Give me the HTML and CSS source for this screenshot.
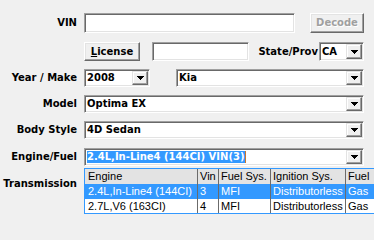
FILE: index.html
```html
<!DOCTYPE html>
<html>
<head>
<meta charset="utf-8">
<title>Vehicle</title>
<link rel="stylesheet" href="styles.css">
</head>
<body>
<div class="form">
  <div class="row row-vin">
    <span class="lbl">VIN</span>
    <div class="fields">
      <div class="edit edit-vin"></div>
      <button class="btn btn-decode" disabled>Decode</button>
    </div>
  </div>

  <div class="row row-lic">
    <span class="lbl"></span>
    <div class="fields">
      <button class="btn btn-lic"><u>L</u>icense</button>
      <div class="edit edit-plate"></div>
      <span class="lbl lbl-state">State/Prov</span>
      <div class="combo combo-state"><span class="combo-text">CA</span><span class="drop"><svg width="7" height="4" viewBox="0 0 7 4" shape-rendering="crispEdges"><path d="M0 0h7v1H0zM1 1h5v1H1zM2 2h3v1H2zM3 3h1v1H3z"/></svg></span></div>
    </div>
  </div>

  <div class="row row-std">
    <span class="lbl">Year / Make</span>
    <div class="fields">
      <div class="combo combo-year"><span class="combo-text">2008</span><span class="drop"><svg width="7" height="4" viewBox="0 0 7 4" shape-rendering="crispEdges"><path d="M0 0h7v1H0zM1 1h5v1H1zM2 2h3v1H2zM3 3h1v1H3z"/></svg></span></div>
      <div class="combo combo-make"><span class="combo-text">Kia</span><span class="drop"><svg width="7" height="4" viewBox="0 0 7 4" shape-rendering="crispEdges"><path d="M0 0h7v1H0zM1 1h5v1H1zM2 2h3v1H2zM3 3h1v1H3z"/></svg></span></div>
    </div>
  </div>

  <div class="row row-std">
    <span class="lbl">Model</span>
    <div class="fields">
      <div class="combo combo-full"><span class="combo-text">Optima EX</span><span class="drop"><svg width="7" height="4" viewBox="0 0 7 4" shape-rendering="crispEdges"><path d="M0 0h7v1H0zM1 1h5v1H1zM2 2h3v1H2zM3 3h1v1H3z"/></svg></span></div>
    </div>
  </div>

  <div class="row row-std">
    <span class="lbl">Body Style</span>
    <div class="fields">
      <div class="combo combo-full"><span class="combo-text">4D Sedan</span><span class="drop"><svg width="7" height="4" viewBox="0 0 7 4" shape-rendering="crispEdges"><path d="M0 0h7v1H0zM1 1h5v1H1zM2 2h3v1H2zM3 3h1v1H3z"/></svg></span></div>
    </div>
  </div>

  <div class="row row-engine">
    <span class="lbl">Engine/Fuel</span>
    <div class="fields">
      <div class="combo combo-full combo-open"><span class="combo-text"><span class="hl">2.4L,In-Line4 (144CI) VIN(3)</span><span class="caret"></span></span><span class="drop"><svg width="7" height="4" viewBox="0 0 7 4" shape-rendering="crispEdges"><path d="M0 0h7v1H0zM1 1h5v1H1zM2 2h3v1H2zM3 3h1v1H3z"/></svg></span>
        <div class="droplist">
          <div class="grow ghead">
            <span class="cell">Engine</span><span class="cell">Vin</span><span class="cell">Fuel Sys.</span><span class="cell">Ignition Sys.</span><span class="cell">Fuel</span>
          </div>
          <div class="grow gsel">
            <span class="cell">2.4L,In-Line4 (144CI)</span><span class="cell">3</span><span class="cell">MFI</span><span class="cell">Distributorless</span><span class="cell">Gas</span>
          </div>
          <div class="grow">
            <span class="cell">2.7L,V6 (163CI)</span><span class="cell">4</span><span class="cell">MFI</span><span class="cell">Distributorless</span><span class="cell">Gas</span>
          </div>
        </div>
      </div>
    </div>
  </div>

  <div class="row row-trans">
    <span class="lbl">Transmission</span>
    <div class="fields">
      <div class="combo combo-full"><span class="combo-text"></span><span class="drop"><svg width="7" height="4" viewBox="0 0 7 4" shape-rendering="crispEdges"><path d="M0 0h7v1H0zM1 1h5v1H1zM2 2h3v1H2zM3 3h1v1H3z"/></svg></span></div>
    </div>
  </div>
</div>
</body>
</html>
```

FILE: styles.css
```css
html, body {
  margin: 0;
  padding: 0;
  overflow: hidden;
}

body {
  width: 374px;
  height: 214px;
  background: #f0f0f0;
  color: #000;
  font-family: "DejaVu Sans", "Liberation Sans", sans-serif;
  font-weight: bold;
  font-size: 10px;
}

.form {
  display: flex;
  flex-direction: column;
  padding-top: 13px;
}

.row {
  display: grid;
  grid-template-columns: 77px 280px;
  column-gap: 7px;
  align-items: center;
  height: 18px;
  margin-top: 8px;
}

.row-vin { height: 20px; margin-top: 0; }
.row-lic { height: 19px; margin-top: 9px; }
.row-engine { margin-top: 9px; position: relative; z-index: 2; }
.row-trans { margin-top: 9px; }

.lbl {
  text-align: right;
  white-space: nowrap;
  line-height: 12px;
}

.fields {
  display: flex;
  height: 100%;
  align-items: stretch;
}

/* sunken edit box */
.edit,
.combo {
  box-sizing: border-box;
  background: #fff;
  border: 1px solid;
  border-color: #a0a0a0 #fff #fff #a0a0a0;
  box-shadow: inset 1px 1px #696969, inset -1px -1px #e3e3e3;
}

.edit-vin { width: 211px; }
.edit-plate { width: 97px; }

/* raised button */
.btn {
  box-sizing: border-box;
  margin: 0;
  padding: 0;
  background: #f0f0f0;
  border: 1px solid;
  border-color: #fff #696969 #696969 #fff;
  box-shadow: inset -1px -1px #a0a0a0, inset 1px 1px #e3e3e3;
  font: inherit;
  color: #000;
  line-height: 12px;
  text-align: center;
}

.btn u { text-decoration: underline; }

.btn-decode {
  width: 54px;
  margin-left: auto;
  color: #a0a0a0;
  text-shadow: 1px 1px #fff;
}

.btn-lic {
  width: 56px;
  margin-right: 12px;
}

.lbl-state {
  flex: 1;
  padding-right: 1px;
  align-self: center;
}

/* combo box */
.combo {
  display: flex;
  align-items: center;
  padding: 1px;
  position: relative;
}

.combo-text {
  flex: 1;
  padding-left: 1px;
  white-space: nowrap;
  overflow: hidden;
  line-height: 12px;
  display: flex;
  align-items: center;
}

.drop {
  box-sizing: border-box;
  width: 16px;
  align-self: stretch;
  display: flex;
  align-items: center;
  justify-content: center;
  background: #f0f0f0;
  border: 1px solid;
  border-color: #e3e3e3 #696969 #696969 #e3e3e3;
  box-shadow: inset -1px -1px #a0a0a0, inset 1px 1px #fff;
}

.drop svg { display: block; margin-left: 1px; }
.drop path { fill: #000; }

.combo-state { width: 45px; }
.combo-year { width: 66px; }
.combo-make { width: 188px; margin-left: auto; }
.combo-full { width: 280px; }

.hl {
  background: #3399ff;
  color: #fff;
  line-height: 12px;
}

.caret {
  display: inline-block;
  width: 1px;
  height: 12px;
  background: #c9772f;
}

/* drop-down list overlaying the Transmission field */
.droplist {
  position: absolute;
  top: 19px;
  left: -1px;
  width: 300px;
  height: 46px;
  box-sizing: border-box;
  overflow: hidden;
  background: #fff;
  border: 1px solid #3399ff;
  font-family: "Liberation Sans", Arial, sans-serif;
  font-weight: normal;
  font-size: 11px;
}

.grow {
  display: grid;
  grid-template-columns: 113px 21px 52px 75px 60px;
  height: 15px;
  background: #fff;
  color: #000;
}

.ghead { background: #e3e3e3; }
.gsel { background: #3399ff; color: #fff; }

.cell {
  box-sizing: border-box;
  border-right: 1px solid #6b6b6b;
  padding-left: 2px;
  line-height: 15px;
  white-space: nowrap;
  overflow: hidden;
}

.cell:first-child { padding-left: 3px; }
```
